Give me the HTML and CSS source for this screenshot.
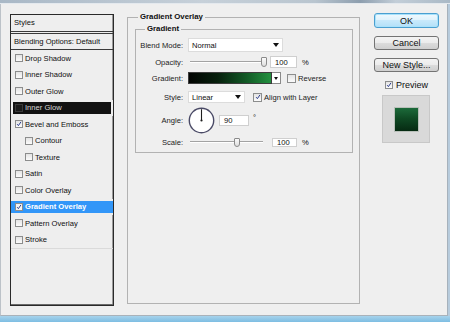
FILE: index.html
```html
<!DOCTYPE html>
<html>
<head>
<meta charset="utf-8">
<title>Layer Style</title>
<link rel="stylesheet" href="styles.css">
</head>
<body>
<div class="window">
  <div class="topbar"></div>
  <div class="dialog">
    <div class="styles-panel">
      <div class="sp-head">Styles</div>
      <div class="sp-blend">Blending Options: Default</div>
      <div class="sp-list">
        <div class="sp-item"><span class="cb"></span>Drop Shadow</div>
        <div class="sp-item"><span class="cb"></span>Inner Shadow</div>
        <div class="sp-item"><span class="cb"></span>Outer Glow</div>
        <div class="sp-item dark"><span class="cb"></span>Inner Glow</div>
        <div class="sp-item"><span class="cb checked"><svg viewBox="0 0 8 8"><path d="M1.5 4.2 L3.2 6.2 L6.6 1.2" /></svg></span>Bevel and Emboss</div>
        <div class="sp-item sub"><span class="cb"></span>Contour</div>
        <div class="sp-item sub"><span class="cb"></span>Texture</div>
        <div class="sp-item"><span class="cb"></span>Satin</div>
        <div class="sp-item"><span class="cb"></span>Color Overlay</div>
        <div class="sp-item active"><span class="cb checked"><svg viewBox="0 0 8 8"><path d="M1.5 4.2 L3.2 6.2 L6.6 1.2" /></svg></span>Gradient Overlay</div>
        <div class="sp-item"><span class="cb"></span>Pattern Overlay</div>
        <div class="sp-item"><span class="cb"></span>Stroke</div>
      </div>
    </div>

    <fieldset class="group outer">
      <legend>Gradient Overlay</legend>
      <fieldset class="group inner">
        <legend>Gradient</legend>
        <div class="row r-blend">
          <span class="lbl">Blend Mode:</span>
          <div class="select s-blend"><span>Normal</span><i class="arrow"></i></div>
        </div>
        <div class="row r-opacity">
          <span class="lbl">Opacity:</span>
          <div class="slider s-op"><span class="thumb" style="margin-left:71px"></span></div>
          <div class="num n-op">100</div>
          <span class="unit">%</span>
        </div>
        <div class="row r-grad">
          <span class="lbl">Gradient:</span>
          <div class="grad"></div>
          <div class="grad-btn"><i class="arrow"></i></div>
          <span class="cb cb-rev"></span>
          <span class="cb-text">Reverse</span>
        </div>
        <div class="row r-style">
          <span class="lbl">Style:</span>
          <div class="select s-style"><span>Linear</span><i class="arrow"></i></div>
          <span class="cb checked cb-align"><svg viewBox="0 0 8 8"><path d="M1.5 4.2 L3.2 6.2 L6.6 1.2" /></svg></span>
          <span class="cb-text">Align with Layer</span>
        </div>
        <div class="row r-angle">
          <span class="lbl">Angle:</span>
          <svg class="dial" viewBox="0 0 27 27" width="27" height="27">
            <circle cx="13.5" cy="13.5" r="12.2" fill="#fff" stroke="#4a4a66" stroke-width="1.4"/>
            <line x1="13.5" y1="13.5" x2="13.5" y2="2.2" stroke="#1e1e1e" stroke-width="1.1"/>
            <circle cx="13.5" cy="13.5" r="1.1" fill="#1e1e1e"/>
          </svg>
          <div class="num n-angle">90</div>
          <span class="deg">°</span>
        </div>
        <div class="row r-scale">
          <span class="lbl">Scale:</span>
          <div class="slider s-scale"><span class="thumb" style="margin-left:44px"></span></div>
          <div class="num n-scale">100</div>
          <span class="unit">%</span>
        </div>
      </fieldset>
    </fieldset>

    <div class="side">
      <div class="btn ok">OK</div>
      <div class="btn">Cancel</div>
      <div class="btn">New Style...</div>
      <div class="preview-row"><span class="cb checked"><svg viewBox="0 0 8 8"><path d="M1.5 4.2 L3.2 6.2 L6.6 1.2" /></svg></span><span class="pv-text">Preview</span></div>
      <div class="preview-box"><div class="swatch"></div></div>
    </div>
  </div>
  <div class="taskbar"></div>
</div>
</body>
</html>
```

FILE: styles.css
```css
html, body {
  margin: 0;
  padding: 0;
  background: #b7cbdc;
}

.window {
  width: 450px;
  height: 322px;
  display: flex;
  flex-direction: column;
  overflow: hidden;
  font-family: "Liberation Sans", Arial, sans-serif;
  font-size: 7.6px;
  color: #0e0e0e;
}

.topbar {
  height: 3px;
  border-bottom: 1px solid #e4e9ee;
  background: linear-gradient(to right, #a9b8c6 0%, #c6d0d9 45%, #b9c5cf 70%, #8d9eae 80%, #c3ced8 88%, #aab9c6 100%);
}

.dialog {
  box-sizing: border-box;
  width: 448px;
  height: 312px;
  display: flex;
  align-items: flex-start;
  padding-left: 9px;
  background: #efefef;
  border-left: 1px solid #bcc2c8;
  border-right: 1px solid #a6b1bb;
  border-bottom: 1px solid #a9b2ba;
}

.taskbar {
  flex: 1;
  background: linear-gradient(to bottom, #a7d3ec, #7dbde2);
}

/* ---------- styles list ---------- */
.styles-panel {
  box-sizing: border-box;
  flex-shrink: 0;
  margin-top: 10px;
  width: 104px;
  height: 292px;
  border: 1px solid #2a2a2a;
  box-shadow: inset 0 -1px 0 #6a6a6a, inset -1px 0 0 #9a9a9a;
  background: #eeeeee;
}

.sp-head {
  height: 16px;
  line-height: 16px;
  padding-left: 3px;
  border-bottom: 3px double #3a3a3a;
}

.sp-blend {
  height: 15px;
  line-height: 15px;
  padding-left: 3px;
  border-bottom: 1px solid #3a3a3a;
}

.sp-list {
  border-bottom: 1px solid #dadada;
}

.sp-item {
  box-sizing: border-box;
  height: 16.5px;
  display: flex;
  align-items: center;
  gap: 2px;
  padding-left: 4px;
}

.sp-item.sub {
  padding-left: 14px;
}

.sp-item.dark {
  border: 2px solid #eeeeee;
  padding-left: 2px;
  background: #121212;
  color: #d8d8d8;
}

.sp-item.dark .cb {
  background: #1a1a1a;
  border-color: #3a3a3a;
}

.sp-item.active {
  border-top: 2px solid #eeeeee;
  border-bottom: 2px solid #eeeeee;
  background: #3296f8;
  color: #ffffff;
  font-weight: bold;
}

/* ---------- checkbox ---------- */
.cb {
  box-sizing: border-box;
  display: inline-flex;
  flex-shrink: 0;
  width: 8px;
  height: 8px;
  border: 1px solid #8c8d8d;
  background: linear-gradient(to bottom, #e4e4e4, #fbfbfb);
}

.cb svg {
  width: 6px;
  height: 6px;
}

.cb svg path {
  fill: none;
  stroke: #2a3c8e;
  stroke-width: 1.3;
}

.active .cb {
  background: #f4f4f4;
}

/* ---------- group boxes ---------- */
.group {
  box-sizing: border-box;
  margin: 0;
  padding: 0;
  min-width: 0;
  border: 1px solid #b2b2b2;
}

.group > legend {
  padding: 0 2px;
  font-weight: bold;
  font-size: 7.8px;
  line-height: 10px;
  color: #0e0e0e;
}

.outer {
  flex-shrink: 0;
  margin-top: 8px;
  margin-left: 13px;
  width: 233px;
  height: 292px;
}

.outer > legend {
  margin-left: 10px;
}

.inner {
  margin: 2px 6px 0 7px;
  width: 218px;
  padding: 4px 0 5px 0;
}

.inner > legend {
  margin-left: 9px;
}

/* ---------- rows ---------- */
.row {
  display: flex;
  align-items: center;
}

.lbl {
  flex-shrink: 0;
  width: 47px;
  margin-right: 5px;
  text-align: right;
  color: #222;
}

.r-blend { height: 14px; }
.r-opacity { height: 12px; margin-top: 4px; }
.r-grad { height: 12px; margin-top: 4px; }
.r-style { height: 12px; margin-top: 7px; }
.r-angle { height: 26px; margin-top: 4px; }
.r-scale { height: 10px; margin-top: 4px; }

.select {
  box-sizing: border-box;
  display: flex;
  align-items: center;
  justify-content: space-between;
  background: #ffffff;
  border: 1px solid #dcdcdc;
  padding: 0 3px 0 3px;
}

.s-blend { width: 95px; height: 14px; }
.s-style { width: 57px; height: 12px; }

.arrow {
  display: block;
  width: 0;
  height: 0;
  border-left: 3px solid transparent;
  border-right: 3px solid transparent;
  border-top: 4px solid #111;
}

.slider {
  display: flex;
  align-items: center;
  height: 12px;
  margin-left: 2px;
  background: linear-gradient(to bottom, transparent 5px, #a3a3a3 5px, #a3a3a3 6px, #ffffff 6px, #ffffff 7px, transparent 7px);
}

.s-op { width: 72px; }
.s-scale { width: 73px; height: 10px; background: linear-gradient(to bottom, transparent 4px, #a3a3a3 4px, #a3a3a3 5px, #ffffff 5px, #ffffff 6px, transparent 6px); }

.thumb {
  box-sizing: border-box;
  flex-shrink: 0;
  width: 6px;
  height: 10px;
  border: 1px solid #8a8a8a;
  border-radius: 1px 1px 3px 3px;
  background: linear-gradient(to bottom, #fafafa, #dedede);
}

.s-scale .thumb {
  width: 6px;
  height: 9px;
}

.num {
  box-sizing: border-box;
  display: flex;
  align-items: center;
  background: #ffffff;
  border: 1px solid #cfcfcf;
  padding-left: 4px;
}

.n-op { width: 27px; height: 12px; margin-left: 8px; }
.n-angle { width: 30px; height: 11px; margin-left: 4px; }
.n-scale { width: 25px; height: 9px; margin-left: 9px; }

.unit {
  margin-left: 5px;
}

.deg {
  margin-left: 4px;
  align-self: flex-start;
  margin-top: 6px;
}

.grad {
  box-sizing: border-box;
  width: 84px;
  height: 12px;
  border: 1px solid #3c3c3c;
  background: linear-gradient(to right, #020402 0%, #07200d 35%, #125a26 70%, #23913f 100%);
}

.grad-btn {
  box-sizing: border-box;
  display: flex;
  align-items: center;
  justify-content: center;
  width: 9px;
  height: 12px;
  border: 1px solid #8a8a8a;
  border-left: none;
  background: #ffffff;
}

.grad-btn .arrow {
  border-left-width: 2px;
  border-right-width: 2px;
  border-top-width: 3px;
}

.cb-rev {
  width: 9px;
  height: 9px;
  margin-left: 6px;
}

.cb-align {
  width: 9px;
  height: 9px;
  margin-left: 8px;
  justify-content: center;
  align-items: center;
}

.cb-text {
  margin-left: 2px;
  color: #222;
}

.dial {
  flex-shrink: 0;
  display: block;
}

/* ---------- right side ---------- */
.side {
  flex-shrink: 0;
  display: flex;
  flex-direction: column;
  width: 65px;
  margin-top: 9px;
  margin-left: 14px;
  font-size: 9px;
}

.btn {
  box-sizing: border-box;
  display: flex;
  align-items: center;
  justify-content: center;
  height: 14px;
  margin-top: 8px;
  border: 1px solid #737373;
  border-radius: 3px;
  background: linear-gradient(to bottom, #f3f3f3 0%, #ebebeb 50%, #dcdcdc 50%, #cfcfcf 100%);
  color: #111;
}

.btn.ok {
  height: 15px;
  margin-top: 0;
  border-color: #4b9fd0;
  background: linear-gradient(to bottom, #f0f9fe 0%, #def2fc 50%, #c8e9fb 50%, #b3e0f8 100%);
  box-shadow: inset 0 0 0 1px #a9e2fb;
}

.preview-row {
  display: flex;
  align-items: center;
  height: 9px;
  margin-top: 8px;
  padding-left: 11px;
}

.preview-row .cb {
  width: 8px;
  height: 8px;
  align-items: center;
  justify-content: center;
}

.pv-text {
  margin-left: 3px;
}

.preview-box {
  box-sizing: border-box;
  display: flex;
  align-items: center;
  justify-content: center;
  width: 48px;
  height: 48px;
  margin-top: 6px;
  margin-left: 8px;
  border: 1px solid #c8c8c8;
  background: #d9d9d9;
}

.swatch {
  box-sizing: border-box;
  width: 25px;
  height: 25px;
  border: 1px solid #b8bfb9;
  background: linear-gradient(to bottom, #1c6a3a 0%, #0f4a24 45%, #062a12 100%);
}
```
